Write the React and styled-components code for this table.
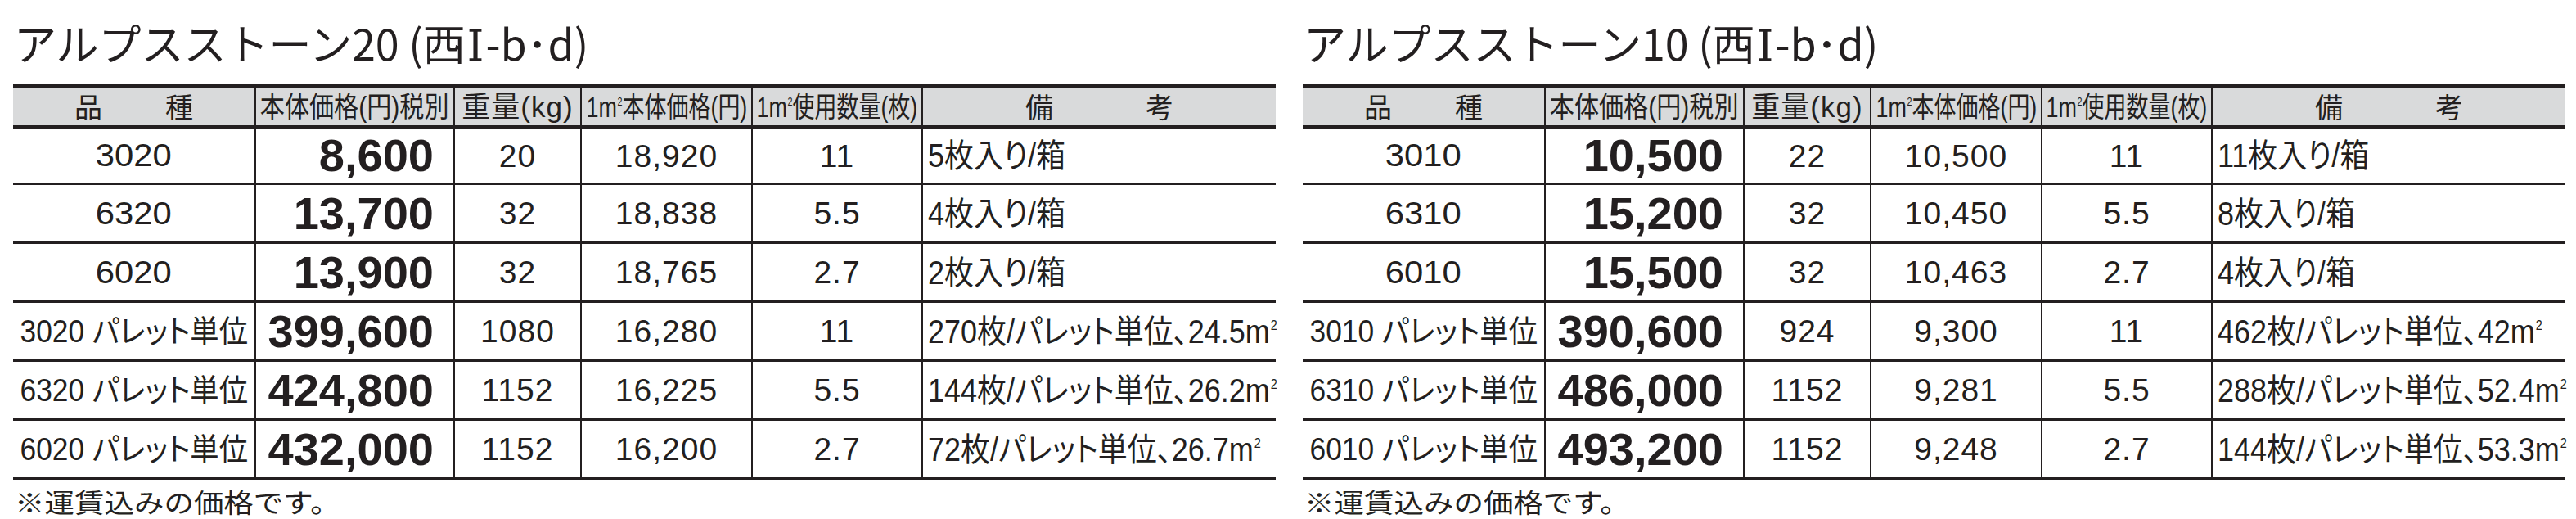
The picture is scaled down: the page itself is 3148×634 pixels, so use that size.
import styled, { createGlobalStyle } from "styled-components";

const INK = "#231f20";

const GlobalStyle = createGlobalStyle`
  html, body {
    margin: 0;
    padding: 0;
    background: #ffffff;
  }
  body {
    color: ${INK};
    font-family: "Liberation Sans", "Noto Sans CJK JP", sans-serif;
  }
`;

const COLS = "295px 243px 155px 209px 208px 433px";

const Page = styled.div`
  display: flex;
  gap: 33px;
  padding-left: 16px;
  width: 3148px;
  height: 634px;
  box-sizing: border-box;
  overflow: hidden;
`;

const Section = styled.section`
  width: 1543px;
  display: flex;
  flex-direction: column;
`;

const Title = styled.h2`
  margin: 26px 0 21px 1px;
  font: 400 52px/52px "Noto Sans CJK JP", sans-serif;
  white-space: nowrap;
`;

const Numeral = styled.span`
  font-family: "DejaVu Serif", "Liberation Serif", serif;
  margin: 0 2px;
`;

const Table = styled.div`
  border-top: 4px solid ${INK};
  border-bottom: 3px solid ${INK};
`;

const HeadRow = styled.div`
  display: grid;
  grid-template-columns: ${COLS};
  height: 50px;
  box-sizing: border-box;
  background: #d9dadb;
  border-bottom: 4px solid ${INK};
`;

const BodyRow = styled.div`
  display: grid;
  grid-template-columns: ${COLS};
  height: 66px;

  & + & {
    height: 69px;
    border-top: 3px solid ${INK};
  }
`;

const justify = { left: "flex-start", center: "center", right: "flex-end" };

const Cell = styled.div`
  display: flex;
  align-items: center;
  justify-content: ${(p) => justify[p.$align || "center"]};
  padding: ${(p) => p.$pad || "0"};
  min-width: 0;
  box-sizing: border-box;

  & + & {
    border-left: 2px solid ${INK};
  }
`;

const Txt = styled.span`
  display: inline-block;
  flex-shrink: 0;
  white-space: nowrap;
  transform: scaleX(${(p) => p.$sx || 1});
  transform-origin: ${(p) => p.$align || "center"} center;
  font-size: ${(p) => p.$size || 38}px;
  font-weight: ${(p) => (p.$bold ? 700 : 400)};
  letter-spacing: ${(p) => p.$ls || 0}px;
  line-height: 1;
  font-feature-settings: "palt";
`;

const HeadTxt = styled(Txt)`
  font-size: 35px;
`;

const Spread = styled.span`
  display: flex;
  gap: ${(p) => p.$gap}px;
  font-size: 34px;
  line-height: 1;
  font-family: "Noto Sans CJK JP", sans-serif;
`;

const Sup = styled.span`
  font-size: 0.4em;
  vertical-align: 0.95em;
  margin-left: 1px;
`;

const Note = styled.p`
  margin: 10px 0 0 2px;
  font: 400 32px/32px "Noto Sans CJK JP", sans-serif;
  white-space: nowrap;
  transform: scaleX(1.14);
  transform-origin: left center;
`;

const withSq = (s) =>
  s.split("㎡").flatMap((part, i) =>
    i === 0 ? [part] : [<span key={i}>m<Sup>2</Sup></span>, part]
  );

const tables = [
  {
    name: "アルプスストーン20",
    rows: [
      ["3020", "8,600", "20", "18,920", "11", "5枚入り/箱"],
      ["6320", "13,700", "32", "18,838", "5.5", "4枚入り/箱"],
      ["6020", "13,900", "32", "18,765", "2.7", "2枚入り/箱"],
      ["3020 パレット単位", "399,600", "1080", "16,280", "11", "270枚/パレット単位、24.5㎡"],
      ["6320 パレット単位", "424,800", "1152", "16,225", "5.5", "144枚/パレット単位、26.2㎡"],
      ["6020 パレット単位", "432,000", "1152", "16,200", "2.7", "72枚/パレット単位、26.7㎡"],
    ],
  },
  {
    name: "アルプスストーン10",
    rows: [
      ["3010", "10,500", "22", "10,500", "11", "11枚入り/箱"],
      ["6310", "15,200", "32", "10,450", "5.5", "8枚入り/箱"],
      ["6010", "15,500", "32", "10,463", "2.7", "4枚入り/箱"],
      ["3010 パレット単位", "390,600", "924", "9,300", "11", "462枚/パレット単位、42㎡"],
      ["6310 パレット単位", "486,000", "1152", "9,281", "5.5", "288枚/パレット単位、52.4㎡"],
      ["6010 パレット単位", "493,200", "1152", "9,248", "2.7", "144枚/パレット単位、53.3㎡"],
    ],
  },
];

const Header = () => (
  <HeadRow>
    <Cell>
      <Spread $gap={77}>
        <span>品</span>
        <span>種</span>
      </Spread>
    </Cell>
    <Cell>
      <HeadTxt $sx={0.86}>本体価格(円)税別</HeadTxt>
    </Cell>
    <Cell>
      <HeadTxt $ls={1}>重量(kg)</HeadTxt>
    </Cell>
    <Cell>
      <HeadTxt $sx={0.77}>1m<Sup>2</Sup>本体価格(円)</HeadTxt>
    </Cell>
    <Cell>
      <HeadTxt $sx={0.77}>1m<Sup>2</Sup>使用数量(枚)</HeadTxt>
    </Cell>
    <Cell>
      <Spread $gap={113}>
        <span>備</span>
        <span>考</span>
      </Spread>
    </Cell>
  </HeadRow>
);

const Row = ({ cells }) => {
  const [name, price, weight, unit, qty, note] = cells;
  const pallet = name.includes(" ");
  return (
    <BodyRow>
      <Cell>
        <Txt $sx={pallet ? 0.93 : 1.1}>{name}</Txt>
      </Cell>
      <Cell $align="right" $pad="0 24px 0 0">
        <Txt $bold $size={56} $align="right">
          {price}
        </Txt>
      </Cell>
      <Cell>
        <Txt $size={39} $ls={1}>{weight}</Txt>
      </Cell>
      <Cell>
        <Txt $size={39} $ls={1}>{unit}</Txt>
      </Cell>
      <Cell>
        <Txt $size={39} $ls={1}>{qty}</Txt>
      </Cell>
      <Cell $align="left" $pad="0 0 0 6px">
        <Txt $align="left" $size={40} $sx={0.9}>
          {withSq(note)}
        </Txt>
      </Cell>
    </BodyRow>
  );
};

const PriceTable = ({ name, rows }) => (
  <Section>
    <Title>
      {name} (西<Numeral>Ⅰ</Numeral>-b･d)
    </Title>
    <Table>
      <Header />
      {rows.map((r) => (
        <Row key={r[0]} cells={r} />
      ))}
    </Table>
    <Note>※運賃込みの価格です。</Note>
  </Section>
);

export default function App() {
  return (
    <>
      <GlobalStyle />
      <Page>
        {tables.map((t) => (
          <PriceTable key={t.name} {...t} />
        ))}
      </Page>
    </>
  );
}
